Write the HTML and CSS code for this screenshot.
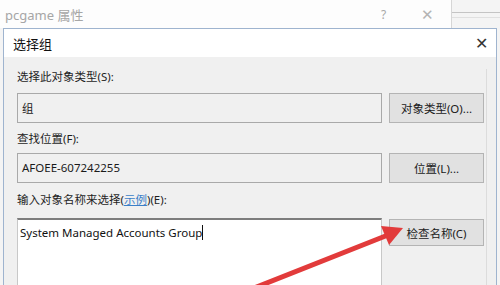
FILE: index.html
```html
<!DOCTYPE html>
<html lang="zh-CN">
<head>
    <meta charset="UTF-8">
    <title>选择组</title>
    <link rel="stylesheet" href="styles.css">
</head>
<body>
    <!-- Window behind the dialog -->
    <div class="back-strip">
        <div class="back-title">
            <span class="back-name">pcgame 属性</span>
            <span class="back-help">?</span>
            <span class="back-close">✕</span>
        </div>
        <div class="back-rest"></div>
    </div>

    <!-- Select group dialog -->
    <div class="dialog">
        <div class="dialog-title">
            <span>选择组</span>
            <span class="dialog-close">✕</span>
        </div>
        <div class="dialog-body">
            <div class="label first">选择此对象类型(S):</div>
            <div class="row">
                <div class="field">组</div>
                <div class="btn">对象类型(O)...</div>
            </div>

            <div class="label">查找位置(F):</div>
            <div class="row">
                <div class="field">AFOEE-607242255</div>
                <div class="btn">位置(L)...</div>
            </div>

            <div class="label third">输入对象名称来选择(<span class="link">示例</span>)(E):</div>
            <div class="row tall">
                <div class="area">System Managed Accounts Group<span class="caret"></span></div>
                <div class="btn short">检查名称(C)</div>
            </div>
        </div>
    </div>

    <!-- Red arrow annotation -->
    <svg class="arrow" width="500" height="285" viewBox="0 0 500 285">
        <line x1="244" y1="292" x2="388" y2="235" stroke="#e23b3b" stroke-width="5" stroke-linecap="round"/>
        <polygon points="403,228 389,245 381,226" fill="#e23b3b"/>
    </svg>
</body>
</html>
```

FILE: styles.css
```css
body {
    margin: 0;
    width: 500px;
    height: 285px;
    overflow: hidden;
    position: relative;
    background: #f4f4f4;
    font-family: "Noto Sans", "Noto Sans CJK SC", sans-serif;
    font-size: 11.5px;
    color: #1a1a1a;
}

/* Back window */
.back-strip {
    display: flex;
    height: 28px;
}

.back-title {
    width: 452px;
    border-right: 1px solid #d6d6d6;
    background: #fdfdfd;
    display: flex;
    align-items: center;
    padding-left: 5px;
    box-sizing: border-box;
    color: #a6a6a6;
    font-size: 13px;
}

.back-name {
    flex: 1;
}

.back-help {
    width: 40px;
    font-size: 12px;
    color: #a8a8a8;
}

.back-close {
    width: 30px;
    color: #b4b4b4;
    font-size: 15px;
}

.back-rest {
    flex: 1;
    margin-top: 12px;
    height: 4px;
    border-top: 1px solid #c4c4c4;
    border-bottom: 1px solid #e0e0e0;
}

/* Dialog */
.dialog {
    margin-left: 3px;
    width: 494px;
    height: 257px;
    border: 1px solid #9fb4cf;
    border-bottom: none;
    box-sizing: border-box;
    background: #f0f0f0;
}

.dialog-title {
    height: 28px;
    background: #ffffff;
    display: flex;
    align-items: center;
    justify-content: space-between;
    padding: 0 8px 0 9px;
    font-size: 13px;
    color: #111;
}

.dialog-close {
    font-size: 16px;
    color: #333;
}

.dialog-body {
    padding: 0 0 0 13px;
    margin-right: 9px;
    border-right: 1px solid #dcdcdc;
    height: 228px;
}

.label {
    height: 16px;
    line-height: 16px;
    margin: 8px 0 6px;
    color: #1e1e1e;
}

.label.first {
    margin-top: 12px;
    margin-bottom: 8px;
}

.label.third {
    margin-top: 9px;
    margin-bottom: 10px;
}

.link {
    color: #3a7fc8;
    text-decoration: underline;
}

.row {
    display: flex;
    gap: 7px;
    height: 30px;
}

.row.tall {
    height: 72px;
}

.field {
    width: 365px;
    height: 30px;
    box-sizing: border-box;
    border: 1px solid #a9a9a9;
    background: #f0f0f0;
    padding: 6px 0 0 4px;
}

.area {
    width: 365px;
    box-sizing: border-box;
    border: 1px solid #c8c8c8;
    border-top: 2px solid #7d7d7d;
    border-bottom: none;
    background: #ffffff;
    padding: 5px 0 0 2px;
    color: #111;
}

.caret {
    display: inline-block;
    width: 1px;
    height: 15px;
    background: #111;
    vertical-align: -3px;
}

.btn {
    width: 95px;
    height: 30px;
    box-sizing: border-box;
    border: 1px solid #b4b4b4;
    background: #e1e1e1;
    display: flex;
    align-items: center;
    justify-content: center;
}

.btn.short {
    height: 27px;
    margin-top: 1px;
}

.arrow {
    position: absolute;
    left: 0;
    top: 0;
}
```
